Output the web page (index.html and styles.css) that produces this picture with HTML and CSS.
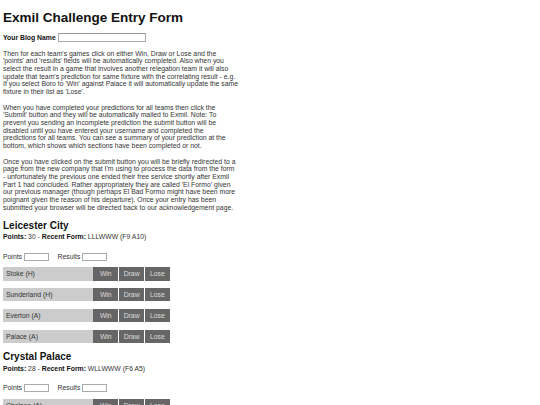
FILE: index.html
```html
<!DOCTYPE html>
<html>
<head>
<meta charset="utf-8">
<title>Exmil Challenge Entry Form</title>
<link rel="stylesheet" href="styles.css">
</head>
<body>
<h1 class="title">Exmil Challenge Entry Form</h1>
<div class="blog">
  <label class="blog-label">Your Blog Name</label>
  <input class="blog-input" type="text">
</div>
<p class="intro">Then for each team's games click on either Win, Draw or Lose and the<br>
'points' and 'results' fields will be automatically completed. Also when you<br>
select the result in a game that involves another relegation team it will also<br>
update that team's prediction for same fixture with the correlating result - e.g.<br>
If you select Boro to 'Win' against Palace it will automatically update the same<br>
fixture in their list as 'Lose'.</p>
<p class="intro">When you have completed your predictions for all teams then click the<br>
'Submit' button and they will be automatically mailed to Exmil. Note: To<br>
prevent you sending an incomplete prediction the submit button will be<br>
disabled until you have entered your username and completed the<br>
predictions for all teams. You can see a summary of your prediction at the<br>
bottom, which shows which sections have been completed or not.</p>
<p class="intro">Once you have clicked on the submit button you will be briefly redirected to a<br>
page from the new company that I'm using to process the data from the form<br>
- unfortunately the previous one ended their free service shortly after Exmil<br>
Part 1 had concluded. Rather appropriately they are called 'El Formo' given<br>
our previous manager (though perhaps El Bad Formo might have been more<br>
poignant given the reason of his departure). Once your entry has been<br>
submitted your browser will be directed back to our acknowledgement page.</p>

<section class="team">
  <h2 class="team-name">Leicester City</h2>
  <div class="stats"><b>Points:</b> 30 - <b>Recent Form:</b> LLLWWW (F9 A10)</div>
  <div class="totals">
    <span class="tot-label">Points</span><input class="tot-input" type="text">
    <span class="tot-label res">Results</span><input class="tot-input" type="text">
  </div>
  <div class="fixture"><div class="opp">Stoke (H)</div><div class="pick first">Win</div><div class="pick">Draw</div><div class="pick">Lose</div></div>
  <div class="fixture"><div class="opp">Sunderland (H)</div><div class="pick first">Win</div><div class="pick">Draw</div><div class="pick">Lose</div></div>
  <div class="fixture"><div class="opp">Everton (A)</div><div class="pick first">Win</div><div class="pick">Draw</div><div class="pick">Lose</div></div>
  <div class="fixture"><div class="opp">Palace (A)</div><div class="pick first">Win</div><div class="pick">Draw</div><div class="pick">Lose</div></div>
</section>

<section class="team">
  <h2 class="team-name">Crystal Palace</h2>
  <div class="stats"><b>Points:</b> 28 - <b>Recent Form:</b> WLLWWW (F6 A5)</div>
  <div class="totals">
    <span class="tot-label">Points</span><input class="tot-input" type="text">
    <span class="tot-label res">Results</span><input class="tot-input" type="text">
  </div>
  <div class="fixture"><div class="opp">Chelsea (A)</div><div class="pick first">Win</div><div class="pick">Draw</div><div class="pick">Lose</div></div>
  <div class="fixture"><div class="opp">Liverpool (H)</div><div class="pick first">Win</div><div class="pick">Draw</div><div class="pick">Lose</div></div>
</section>
</body>
</html>
```
FILE: styles.css
```css
html, body {
  margin: 0;
  padding: 0;
  background: #fff;
}
body {
  padding: 0 3px;
  font-family: "Liberation Sans", Arial, sans-serif;
  font-size: 6.85px;
  line-height: 7.67px;
  color: #222;
}
.title {
  font-size: 13.5px;
  line-height: 15.5px;
  font-weight: bold;
  color: #111;
  margin: 9.5px 0 0;
}
.blog {
  display: flex;
  align-items: center;
  gap: 2.3px;
  margin-top: 8px;
  height: 9px;
}
.blog-label {
  font-weight: bold;
  color: #111;
}
.blog-input {
  width: 87.7px;
  height: 9px;
  box-sizing: border-box;
  margin: 0;
  padding: 0;
  border: 1px solid #aaa;
  border-top-color: #999;
  background: #fff;
}
.intro {
  width: 245px;
  margin: 7.5px 0 0;
  color: #333;
}
.intro + .intro {
  margin-top: 8px;
}
.team-name {
  font-size: 10px;
  line-height: 11.5px;
  font-weight: bold;
  color: #111;
  margin: 8.5px 0 0;
}
.stats {
  margin-top: 1.6px;
  color: #333;
}
.stats b {
  color: #111;
}
.totals {
  display: flex;
  align-items: center;
  margin-top: 12px;
  height: 8px;
  color: #333;
}
.tot-label {
  margin-right: 1.5px;
}
.tot-label.res {
  margin-left: 9px;
}
.tot-input {
  width: 25px;
  height: 8px;
  box-sizing: border-box;
  margin: 0;
  padding: 0;
  border: 1px solid #aaa;
  background: #fff;
}
.fixture {
  display: flex;
  width: 167px;
  height: 13.3px;
  line-height: 13.3px;
  margin-top: 7.5px;
}
.totals + .fixture {
  margin-top: 6.7px;
}
.opp {
  width: 87.3px;
  padding-left: 3px;
  background: #ccc;
  color: #333;
}
.pick {
  width: 24.7px;
  border-left: 1px solid #fff;
  background: #666;
  color: #ddd;
  text-align: center;
}
.pick.first {
  width: 25px;
  border-left: none;
}
```
